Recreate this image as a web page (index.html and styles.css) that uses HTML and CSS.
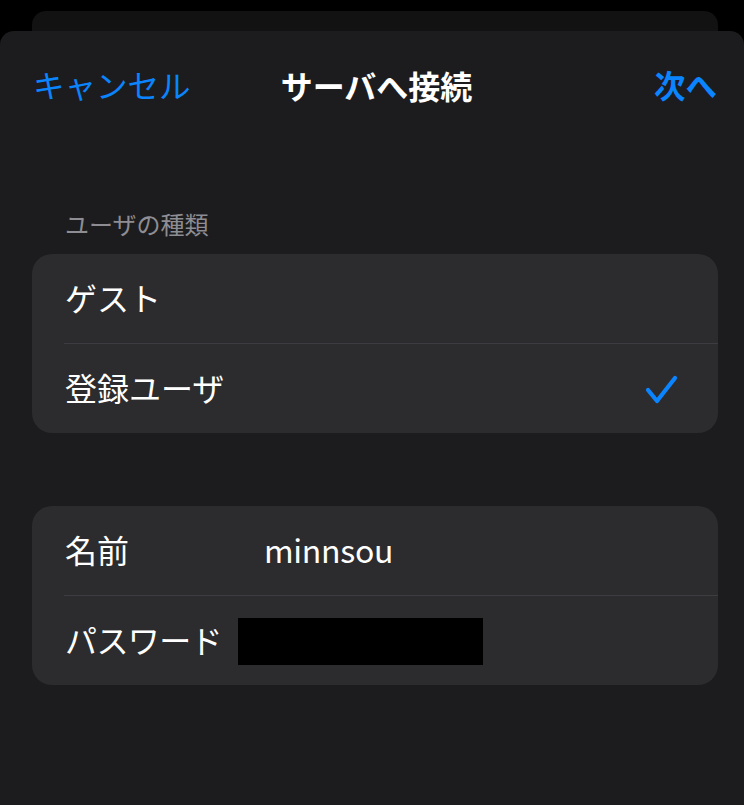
FILE: index.html
```html
<!DOCTYPE html>
<html lang="ja">
<head>
<meta charset="utf-8">
<title>サーバへ接続</title>
<link rel="stylesheet" href="styles.css">
</head>
<body>
<div class="stack">
  <div class="back-card"></div>
  <div class="sheet">
    <div class="nav">
      <span class="nav-btn">キャンセル</span>
      <span class="nav-title">サーバへ接続</span>
      <span class="nav-btn nav-next">次へ</span>
    </div>

    <div class="section-header">ユーザの種類</div>
    <div class="group">
      <div class="row"><span class="label">ゲスト</span></div>
      <div class="sep"></div>
      <div class="row">
        <span class="label">登録ユーザ</span>
        <svg class="check" width="34" height="31" viewBox="0 0 34 31">
          <path d="M4 16 L13 27 L31 4" fill="none" stroke="#0a84ff" stroke-width="4.2" stroke-linecap="round" stroke-linejoin="round"/>
        </svg>
      </div>
    </div>

    <div class="group group-login">
      <div class="row"><span class="label label-name">名前</span><span class="value">minnsou</span></div>
      <div class="sep"></div>
      <div class="row"><span class="label label-pass">パスワード</span><span class="redact"></span></div>
    </div>
  </div>
</div>
</body>
</html>
```
FILE: styles.css
```css
html, body {
  margin: 0;
  padding: 0;
  background: #000;
}
body {
  font-family: "Noto Sans CJK JP", "Noto Sans", sans-serif;
  color: #fff;
  width: 744px;
  height: 805px;
  overflow: hidden;
}
.stack {
  padding-top: 11px;
}
.back-card {
  height: 20px;
  margin: 0 26px 0 32px;
  background: #121212;
  border-radius: 14px 14px 0 0;
}
.sheet {
  background: #1c1c1e;
  border-radius: 14px 14px 0 0;
  height: 774px;
  overflow: hidden;
}
.nav {
  box-sizing: border-box;
  height: 112px;
  display: grid;
  grid-template-columns: 1fr auto 1fr;
  align-items: center;
  padding: 0 27px 5px 33px;
}
.nav-btn {
  color: #0a84ff;
  font-size: 31.5px;
  line-height: 1;
}
.nav-next {
  font-weight: 700;
  justify-self: end;
}
.nav-title {
  font-size: 32px;
  font-weight: 700;
  line-height: 1;
  margin-left: 3px;
}
.section-header {
  color: #8d8d93;
  font-size: 24px;
  line-height: 30px;
  margin: 66px 0 15px 65px;
}
.group {
  margin: 0 26px 0 32px;
  background: #2c2c2e;
  border-radius: 20px;
  overflow: hidden;
}
.group-login {
  margin-top: 73px;
}
.row {
  height: 89px;
  display: flex;
  align-items: center;
  padding: 0 40px 0 33px;
}
.label {
  font-size: 32px;
  line-height: 1;
  flex: none;
  margin-bottom: 4px;
}
.label-name {
  width: 199px;
}
.label-pass {
  width: 173px;
  white-space: nowrap;
  letter-spacing: -0.6px;
}
.value {
  font-size: 32px;
  line-height: 1;
  flex: 1;
  letter-spacing: -0.3px;
  margin-bottom: 4px;
}
.check {
  margin-left: auto;
  margin-top: 2px;
}
.sep {
  height: 1px;
  background: #3d3d41;
  margin-left: 32px;
}
.redact {
  display: block;
  width: 245px;
  height: 47px;
  background: #000;
  margin-top: 1px;
}
```
